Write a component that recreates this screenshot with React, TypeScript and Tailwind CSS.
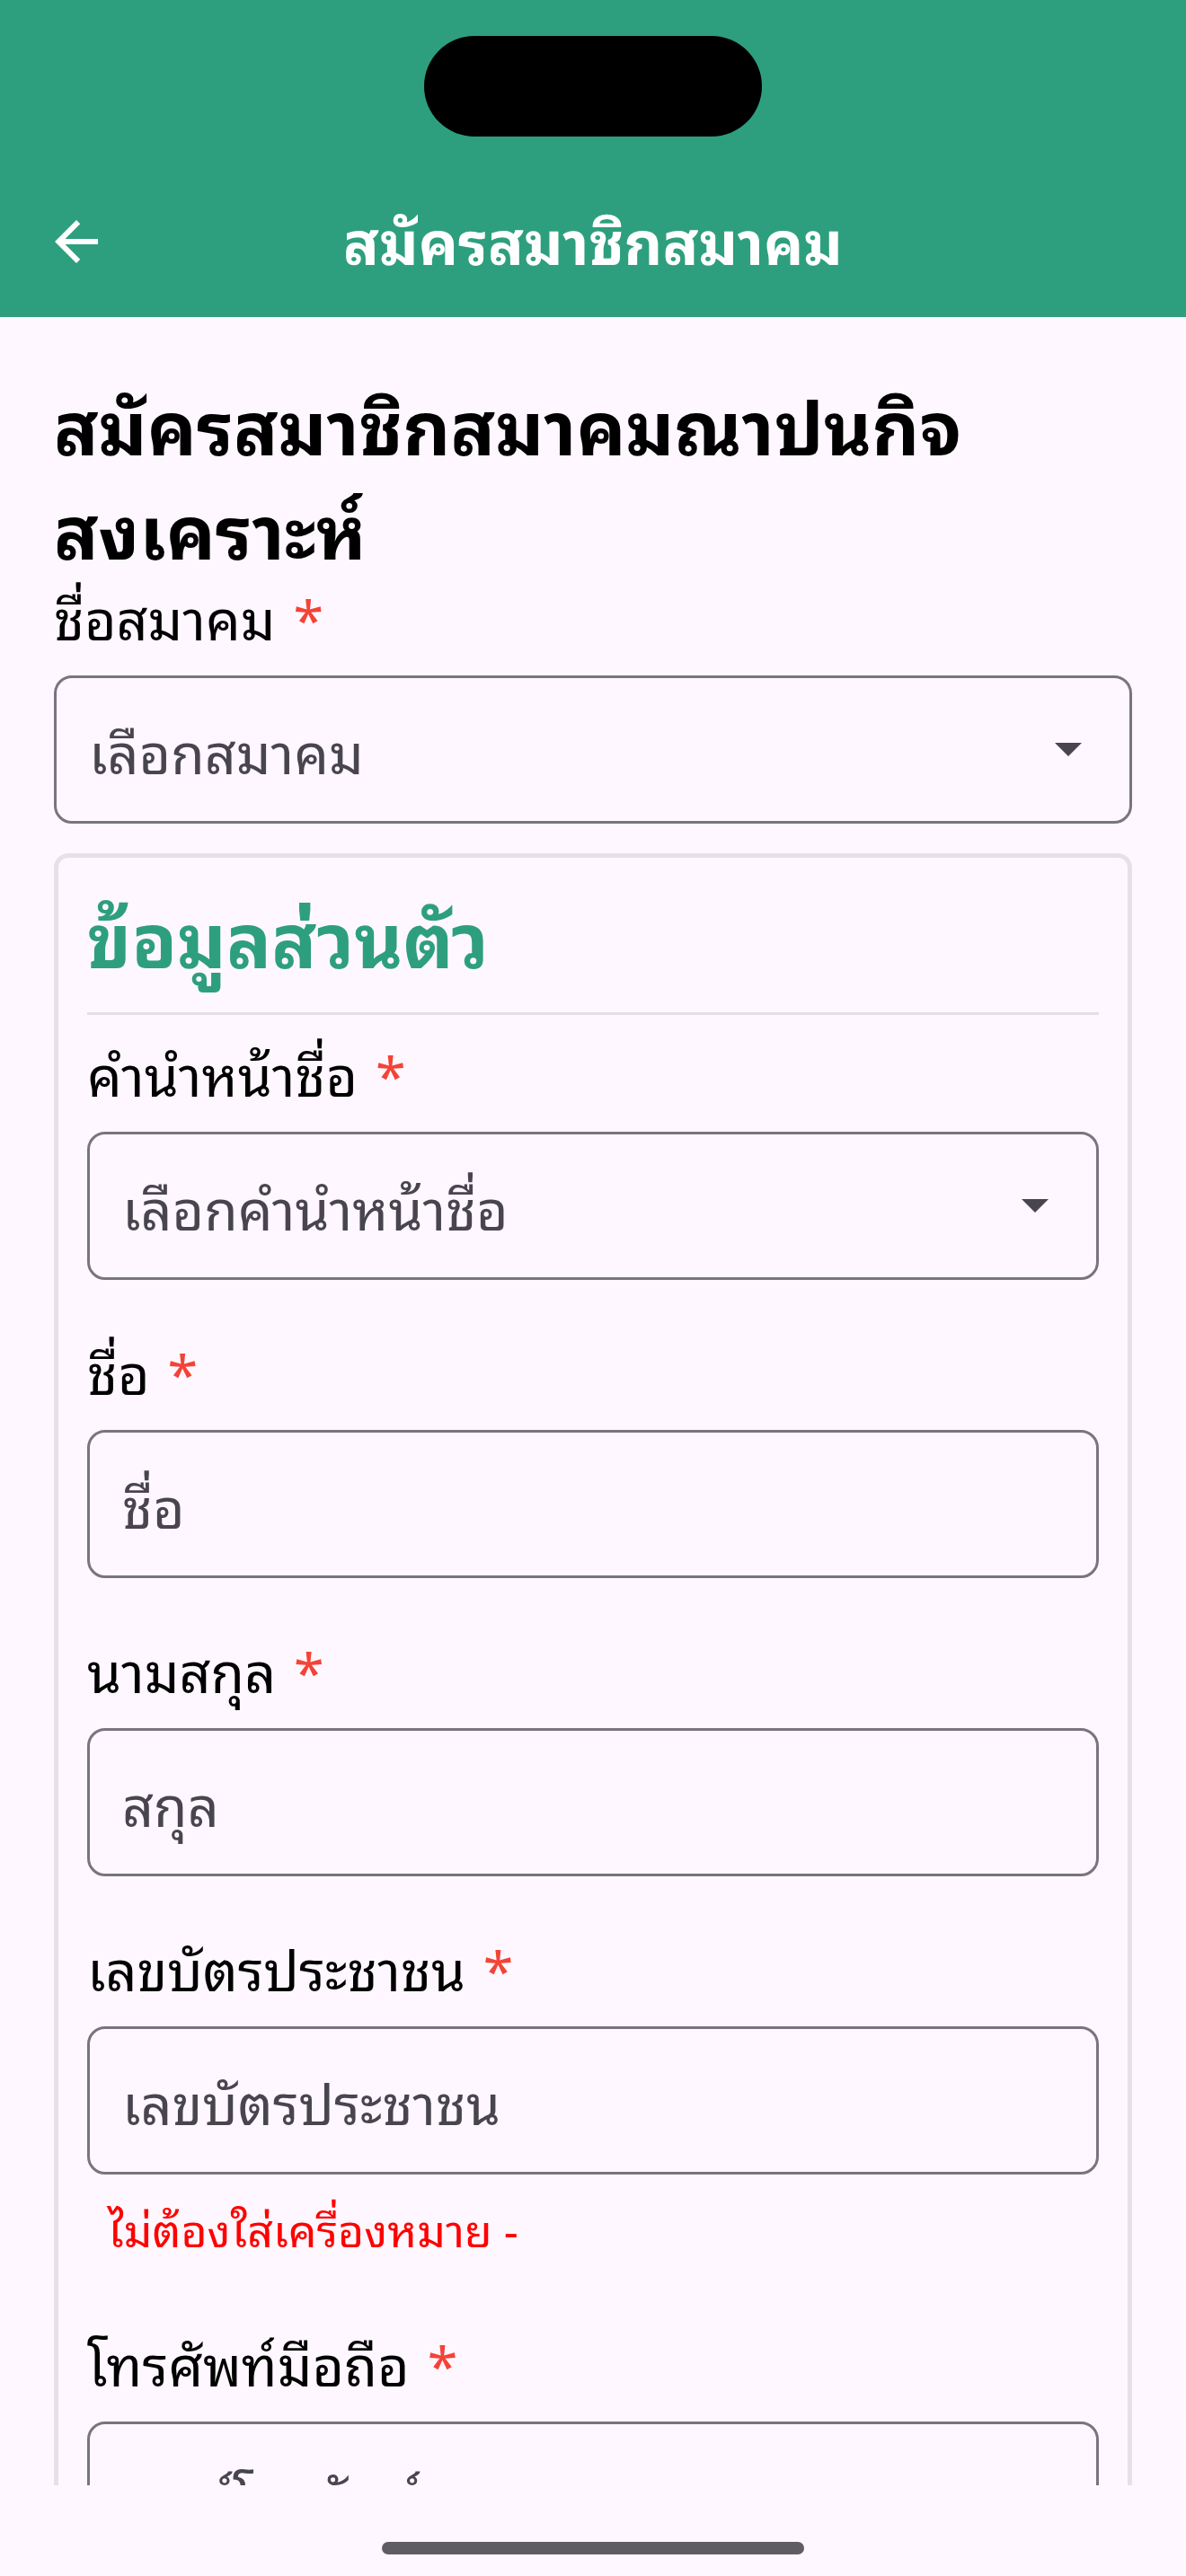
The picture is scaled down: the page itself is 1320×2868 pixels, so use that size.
const Caret = () => (
    <svg width="30" height="15" viewBox="0 0 30 15" className="shrink-0">
        <path d="M0 0h30L15 15z" fill="#49454F" />
    </svg>
);

const BackArrow = () => (
    <svg width="72" height="72" viewBox="0 0 24 24" className="shrink-0">
        <path d="M20 11H7.83l5.59-5.59L12 4l-8 8 8 8 1.41-1.41L7.83 13H20v-2z" fill="#fff" />
    </svg>
);

const Label = ({ text }: { text: string }) => (
    <div className="h-[80px] text-[61px] leading-[80px] text-black whitespace-nowrap">
        {text} <span className="text-[#F44336] ml-[4px]">*</span>
    </div>
);

const Field = ({
    label,
    placeholder,
    select,
}: {
    label: string;
    placeholder: string;
    select?: boolean;
}) => (
    <div className="flex flex-col">
        <Label text={label} />
        <div className="mt-[26px] h-[165px] shrink-0 border-[3px] border-[#79747E] rounded-[20px] pl-[36px] pr-[53px] flex items-center justify-between">
            <span className="text-[61px] text-[#49454F] whitespace-nowrap">{placeholder}</span>
            {select && <Caret />}
        </div>
    </div>
);

export default function App() {
    return (
        <div className="w-[1320px] h-[2868px] bg-[#FEF7FF] flex flex-col overflow-hidden font-['Noto_Sans_Thai_Looped','Noto_Sans_Thai',sans-serif]">
            {/* status bar + app bar */}
            <div className="bg-[#2E9F7E] h-[353px] shrink-0 flex flex-col">
                <div className="h-[185px] pt-[40px] flex justify-center">
                    <div className="w-[376px] h-[112px] bg-black rounded-full" />
                </div>
                <div className="h-[168px] flex items-center pl-[49px]">
                    <BackArrow />
                    <div className="flex-1 text-center pr-[121px] mb-[8px] text-white font-bold text-[66px] whitespace-nowrap">
                        สมัครสมาชิกสมาคม
                    </div>
                </div>
            </div>

            {/* body */}
            <div className="flex-1 overflow-hidden px-[60px] pt-[59px]">
                <h1 className="font-bold text-[82px] leading-[116px] text-black mb-[2px]">
                    สมัครสมาชิกสมาคมณาปนกิจ
                    <br />
                    สงเคราะห์
                </h1>
                <Field label="ชื่อสมาคม" placeholder="เลือกสมาคม" select />

                <div className="mt-[33px] border-[5px] border-[#E6E0E9] rounded-[16px] px-[32px] pt-[28px] pb-[60px]">
                    <div className="font-bold text-[83px] leading-[116px] text-[#2E9F7E] whitespace-nowrap">
                        ข้อมูลส่วนตัว
                    </div>
                    <div className="h-[3px] bg-[#E3DFE4] mt-[28px] mb-[24px]" />
                    <div className="flex flex-col gap-[61px]">
                        <Field label="คำนำหน้าชื่อ" placeholder="เลือกคำนำหน้าชื่อ" select />
                        <Field label="ชื่อ" placeholder="ชื่อ" />
                        <Field label="นามสกุล" placeholder="สกุล" />
                        <div className="flex flex-col">
                            <Field label="เลขบัตรประชาชน" placeholder="เลขบัตรประชาชน" />
                            <div className="text-[50px] leading-[70px] text-[#FF0000] pl-[23px] mt-[24px] mb-[14px] whitespace-nowrap">
                                ไม่ต้องใส่เครื่องหมาย -
                            </div>
                        </div>
                        <Field label="โทรศัพท์มือถือ" placeholder="เบอร์โทรศัพท์" />
                    </div>
                </div>
            </div>

            {/* gesture bar */}
            <div className="h-[101px] shrink-0 flex justify-center pt-[63px]">
                <div className="w-[470px] h-[14px] rounded-full bg-[#5F5D63]" />
            </div>
        </div>
    );
}
